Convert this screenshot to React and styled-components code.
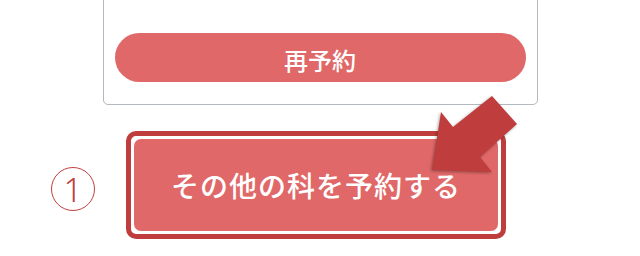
import React from 'react';
import styled, { createGlobalStyle } from 'styled-components';

const GlobalStyle = createGlobalStyle`
  html, body {
    margin: 0;
    padding: 0;
    background: #ffffff;
    overflow: hidden;
  }
  body {
    font-family: "Noto Sans CJK JP", "Noto Sans", sans-serif;
  }
`;

const Page = styled.div`
  width: 640px;
  height: 256px;
  overflow: hidden;
  display: flex;
  flex-direction: column;
`;

const Card = styled.div`
  width: 435px;
  box-sizing: border-box;
  margin: -12px auto 0;
  padding: 44px 11px 22px;
  border: 1px solid #b4b8c0;
  border-radius: 5px;
  background: #ffffff;
`;

const PillButton = styled.button`
  display: flex;
  align-items: center;
  justify-content: center;
  width: 100%;
  height: 49px;
  border: none;
  border-radius: 25px;
  background: #e06868;
  color: #ffffff;
  font-family: inherit;
  font-size: 24px;
  font-weight: 500;
  letter-spacing: 0;
  padding: 3px 0 0;
`;

const ActionRow = styled.div`
  display: flex;
  align-items: center;
  gap: 31px;
  margin-top: 26px;
  padding-left: 51px;
`;

const StepMark = styled.span`
  display: flex;
  align-items: center;
  justify-content: center;
  width: 44px;
  height: 44px;
  box-sizing: border-box;
  border: 1.5px solid #c0403f;
  border-radius: 50%;
  color: #c0403f;
  font-family: "Noto Sans", sans-serif;
  font-weight: 300;
  font-size: 33px;
  line-height: 1;
  margin-top: 8px;
`;

const ButtonFrame = styled.div`
  position: relative;
  width: 380px;
  height: 108px;
  box-sizing: border-box;
  border: 5px solid #bf3d3d;
  border-radius: 10px;
  padding: 3px;
  background: #ffffff;
`;

const MainButton = styled.button`
  display: flex;
  align-items: center;
  justify-content: center;
  width: 100%;
  height: 100%;
  border: none;
  border-radius: 7px;
  background: #e06868;
  color: #ffffff;
  font-family: inherit;
  font-size: 28px;
  font-weight: 500;
  letter-spacing: 1px;
  padding: 0;
`;

const Pointer = styled.svg`
  position: absolute;
  left: 300px;
  top: -41px;
  filter: drop-shadow(-1px 1px 1.5px rgba(0, 0, 0, 0.35));
`;

const App = () => {
  return (
    <Page>
      <GlobalStyle />
      <Card>
        <PillButton>再予約</PillButton>
      </Card>
      <ActionRow>
        <StepMark>1</StepMark>
        <ButtonFrame>
          <MainButton>その他の科を予約する</MainButton>
          <Pointer width="90" height="82" viewBox="0 0 90 82">
            <polygon
              points="1,75 10,17 22,32 61,1 86,29 49,62 61,77"
              fill="#bf3d3d"
            />
          </Pointer>
        </ButtonFrame>
      </ActionRow>
    </Page>
  );
};

export default App;
